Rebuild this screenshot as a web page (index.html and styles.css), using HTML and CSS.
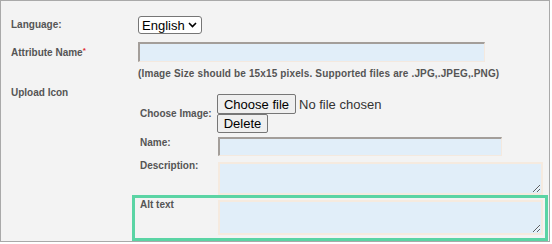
FILE: index.html
```html
<!DOCTYPE html>
<html>
<head>
<meta charset="utf-8">
<link rel="stylesheet" href="styles.css">
</head>
<body>
<div class="panel">
  <div class="row row-lang">
    <div class="label">Language:</div>
    <div class="field">
      <span class="sel">
        <select class="lang"><option>English</option></select>
        <svg class="chev" width="9" height="6" viewBox="0 0 9 6"><path d="M1 1 L4.5 4.5 L8 1" fill="none" stroke="#000" stroke-width="1.6"/></svg>
      </span>
    </div>
  </div>
  <div class="row row-attr">
    <div class="label">Attribute Name<span class="req">*</span></div>
    <div class="field"><input class="text attr" type="text"></div>
  </div>
  <div class="row row-note">
    <div class="label"></div>
    <div class="field note">(Image Size should be 15x15 pixels. Supported files are .JPG,.JPEG,.PNG)</div>
  </div>
  <div class="row row-upload">
    <div class="label">Upload Icon</div>
    <div class="field nested">
      <div class="nrow nrow-choose">
        <div class="nlabel">Choose Image:</div>
        <div class="buttons">
          <div class="filerow"><button class="btn choose">Choose file</button><span class="nofile">No file chosen</span></div>
          <button class="btn del">Delete</button>
        </div>
      </div>
      <div class="nrow nrow-name">
        <div class="nlabel">Name:</div>
        <input class="text name" type="text">
      </div>
      <div class="nrow nrow-desc">
        <div class="nlabel">Description:</div>
        <textarea class="area desc"></textarea>
      </div>
      <div class="nrow nrow-alt">
        <div class="nlabel">Alt text</div>
        <textarea class="area alt"></textarea>
        <div class="highlight"></div>
      </div>
    </div>
  </div>
</div>
</body>
</html>
```
FILE: styles.css
```css
html, body {
  margin: 0;
  padding: 0;
  background: #ffffff;
}
.panel {
  border: 1px solid #a9a9a9;
  background: #f3f3f3;
  padding: 15px 0 0 10px;
  box-sizing: content-box;
  width: 538px;
  height: 225px;
  font-family: "Liberation Sans", Arial, sans-serif;
  overflow: hidden;
}
.row {
  display: flex;
}
.label {
  width: 127px;
  flex: none;
  font-size: 10px;
  line-height: 12px;
  font-weight: bold;
  color: #555555;
}
.field {
  flex: 1;
  min-width: 0;
}
.row-lang, .row-attr {
  align-items: center;
}
.row-lang .field {
  height: 18px;
  display: flex;
}
.sel {
  position: relative;
  display: block;
  width: 64px;
  height: 18px;
}
.lang {
  appearance: none;
  -webkit-appearance: none;
  display: block;
  box-sizing: border-box;
  font-family: "Liberation Sans", Arial, sans-serif;
  font-size: 13px;
  line-height: 15px;
  height: 18px;
  width: 64px;
  padding: 0 0 0 3px;
  margin: 0;
  border: 1px solid #767676;
  border-radius: 3px;
  background: #ffffff;
  color: #000;
}
.chev {
  position: absolute;
  right: 5px;
  top: 6px;
  pointer-events: none;
}
.row-attr {
  margin-top: 8px;
}
.req {
  color: #e0282e;
  font-size: 8px;
  vertical-align: 3px;
}
.text {
  display: block;
  flex: none;
  box-sizing: border-box;
  margin: 0;
  padding: 0;
  border-style: solid;
  border-width: 2px 1px 1px 2px;
  border-color: #a39e9a #f4e9df #f4e9df #a39e9a;
  background: #e1eef9;
  outline: none;
}
.attr {
  width: 347px;
  height: 20px;
}
.row-note {
  margin-top: 6px;
}
.note {
  font-size: 10px;
  line-height: 12px;
  font-weight: bold;
  letter-spacing: 0.14px;
  white-space: nowrap;
  color: #555555;
}
.row-upload {
  margin-top: 7px;
  align-items: flex-start;
}
.nested {
  padding-top: 7px;
}
.nrow {
  display: flex;
  align-items: flex-start;
  position: relative;
}
.nlabel {
  width: 77px;
  flex: none;
  padding-left: 2px;
  font-size: 10px;
  line-height: 12px;
  font-weight: bold;
  white-space: nowrap;
  color: #555555;
}
.nrow-choose {
  align-items: center;
}
.buttons {
  display: flex;
  flex-direction: column;
  align-items: flex-start;
}
.filerow {
  display: flex;
  align-items: center;
}
.btn {
  font-family: "Liberation Sans", Arial, sans-serif;
  font-size: 13px;
  line-height: 15px;
  white-space: nowrap;
  color: #000;
  background: #efefef;
  border: 1px solid #767676;
  border-radius: 2px;
  padding: 0;
  margin: 0;
  box-sizing: border-box;
}
.choose {
  height: 20px;
  width: 79px;
}
.del {
  height: 19px;
  width: 51px;
}
.nofile {
  font-size: 13px;
  color: #333;
  margin-left: 3px;
  white-space: nowrap;
}
.nrow-name {
  margin-top: 4px;
}
.name {
  width: 284px;
  height: 19px;
  margin-left: 1px;
}
.nrow-desc {
  margin-top: 6px;
}
.nrow-desc .nlabel {
  margin-top: -2px;
}
.area {
  display: block;
  flex: none;
  box-sizing: border-box;
  margin: 0 0 0 1px;
  padding: 0;
  border: 2px solid #f5eadf;
  background: #e1eef9;
  outline: none;
  width: 325px;
}
.desc {
  height: 33px;
}
.nrow-alt {
  margin-top: 5px;
}
.nrow-alt .nlabel {
  margin-top: -1px;
}
.alt {
  height: 35px;
}
.highlight {
  position: absolute;
  left: -6px;
  top: -5px;
  width: 416px;
  height: 46px;
  box-sizing: border-box;
  border: 3px solid #5ad4a4;
  pointer-events: none;
}
```
